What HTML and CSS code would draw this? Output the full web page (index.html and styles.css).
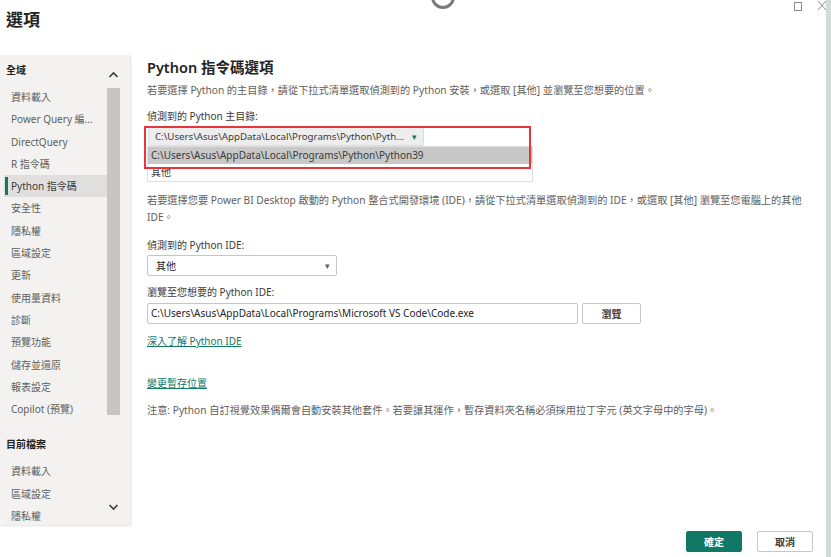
FILE: index.html
```html
<!DOCTYPE html>
<html lang="zh-Hant">
<head>
    <meta charset="UTF-8">
    <meta name="viewport" content="width=device-width, initial-scale=1.0">
    <title>選項</title>
    <link rel="stylesheet" href="styles.css">
</head>
<body>
    <div class="window">
        <div class="dialog">
            <div class="titlebar">
                <h1>選項</h1>
                <div class="controls">
                    <svg class="ctl" width="10" height="12" viewBox="0 0 10 12"><rect x="1.5" y="2.5" width="7" height="8" fill="none" stroke="#8a8a8a" stroke-width="1"/></svg>
                    <svg class="ctl" width="10" height="12" viewBox="0 0 10 12"><path d="M1 1 L9 10 M9 1 L1 10" stroke="#8a8a8a" stroke-width="1" fill="none"/></svg>
                </div>
                <span class="spinner"></span>
            </div>
            <div class="body">
                <div class="sidebar">
                    <div class="nav">
                        <div class="group first">全域</div>
                        <div class="item">資料載入</div>
                        <div class="item">Power Query 編...</div>
                        <div class="item">DirectQuery</div>
                        <div class="item">R 指令碼</div>
                        <div class="item selected">Python 指令碼</div>
                        <div class="item">安全性</div>
                        <div class="item">隱私權</div>
                        <div class="item">區域設定</div>
                        <div class="item">更新</div>
                        <div class="item">使用量資料</div>
                        <div class="item">診斷</div>
                        <div class="item">預覽功能</div>
                        <div class="item">儲存並還原</div>
                        <div class="item">報表設定</div>
                        <div class="item">Copilot (預覽)</div>
                        <div class="group">目前檔案</div>
                        <div class="item">資料載入</div>
                        <div class="item">區域設定</div>
                        <div class="item">隱私權</div>
                    </div>
                    <div class="scrollbar">
                        <svg width="13" height="10" viewBox="0 0 13 10"><path d="M2.5 7 L6.5 3 L10.5 7" stroke="#3b3a39" stroke-width="1.6" fill="none"/></svg>
                        <div class="thumb"></div>
                        <svg class="down" width="13" height="10" viewBox="0 0 13 10"><path d="M2.5 3 L6.5 7 L10.5 3" stroke="#3b3a39" stroke-width="1.6" fill="none"/></svg>
                    </div>
                </div>
                <div class="content">
                    <h2>Python 指令碼選項</h2>
                    <p class="desc">若要選擇 Python 的主目錄，請從下拉式清單選取偵測到的 Python 安裝，或選取 [其他] 並瀏覽至您想要的位置。</p>
                    <div class="label">偵測到的 Python 主目錄:</div>
                    <div class="dropdown-open">
                        <div class="select active">
                            <span>C:\Users\Asus\AppData\Local\Programs\Python\Pyth...</span>
                            <span class="caret green">▾</span>
                        </div>
                        <div class="options">
                            <div class="option hover">C:\Users\Asus\AppData\Local\Programs\Python\Python39</div>
                            <div class="option">其他</div>
                        </div>
                        <div class="highlight"></div>
                    </div>
                    <p class="desc two">若要選擇您要 Power BI Desktop 啟動的 Python 整合式開發環境 (IDE)，請從下拉式清單選取偵測到的 IDE，或選取 [其他] 瀏覽至您電腦上的其他 IDE。</p>
                    <div class="label">偵測到的 Python IDE:</div>
                    <div class="select small">
                        <span>其他</span>
                        <span class="caret">▾</span>
                    </div>
                    <div class="label gap">瀏覽至您想要的 Python IDE:</div>
                    <div class="browse-row">
                        <div class="input">C:\Users\Asus\AppData\Local\Programs\Microsoft VS Code\Code.exe</div>
                        <button class="btn">瀏覽</button>
                    </div>
                    <a class="link first-link" href="#">深入了解 Python IDE</a>
                    <a class="link second-link" href="#">變更暫存位置</a>
                    <p class="desc note">注意: Python 自訂視覺效果偶爾會自動安裝其他套件。若要讓其運作，暫存資料夾名稱必須採用拉丁字元 (英文字母中的字母)。</p>
                    <div class="footer">
                        <button class="btn primary">確定</button>
                        <button class="btn">取消</button>
                    </div>
                </div>
            </div>
        </div>
        <div class="edge"></div>
    </div>
</body>
</html>
```

FILE: styles.css
```css
body {
    margin: 0;
    padding: 0;
    background-color: #fff;
    font-family: "Noto Sans", "Noto Sans CJK TC", sans-serif;
    color: #3b3a39;
    overflow: hidden;
}
.window {
    display: flex;
    width: 831px;
    height: 557px;
}
.dialog {
    flex: 1;
    display: flex;
    flex-direction: column;
    min-width: 0;
}
.edge {
    width: 5px;
    flex-shrink: 0;
    background-color: #cfdcd8;
}
.titlebar {
    position: relative;
    height: 55px;
    display: flex;
    justify-content: space-between;
    align-items: flex-start;
}
.titlebar h1 {
    margin: 9px 0 0 6px;
    font-size: 17px;
    line-height: 22px;
    font-weight: 700;
    color: #252423;
}
.controls {
    display: flex;
    gap: 14px;
    margin-right: -1px;
}
.spinner {
    position: absolute;
    left: 431px;
    top: -15px;
    width: 18px;
    height: 18px;
    border: 3px solid #7a7a7a;
    border-radius: 50%;
}
.body {
    flex: 1;
    display: flex;
    min-height: 0;
}
.sidebar {
    flex-shrink: 0;
    width: 130px;
    height: 470px;
    background-color: #f3f2f1;
    display: flex;
    box-shadow: 1px 1px 2px rgba(0, 0, 0, 0.12);
}
.nav {
    width: 107px;
    font-size: 10px;
    color: #605e5c;
}
.group {
    font-weight: 700;
    color: #252423;
    height: 20px;
    line-height: 20px;
    padding-left: 6px;
    margin-top: 14px;
    margin-bottom: 6px;
}
.group.first {
    margin-top: 5px;
    margin-bottom: 6px;
}
.item {
    height: 22.3px;
    line-height: 22.3px;
    padding-left: 11px;
    white-space: nowrap;
    position: relative;
}
.item.selected {
    background-color: #e1dfdd;
    margin-left: 4px;
    padding-left: 7px;
    color: #3b3a39;
}
.item.selected::before {
    content: "";
    position: absolute;
    left: 1px;
    top: 2px;
    bottom: 2px;
    width: 3px;
    background-color: #117865;
}
.scrollbar {
    width: 13px;
    display: flex;
    flex-direction: column;
    align-items: center;
    padding-top: 15px;
}
.thumb {
    width: 13px;
    height: 327px;
    margin-top: 8px;
    background-color: #c8c6c4;
}
.scrollbar .down {
    margin-top: 87px;
}
.content {
    flex: 1;
    min-width: 0;
    display: flex;
    flex-direction: column;
    align-items: flex-start;
    padding: 2px 13px 5px 17px;
    font-size: 10px;
}
.content h2 {
    margin: 0;
    font-size: 14.5px;
    line-height: 20px;
    font-weight: 600;
    color: #252423;
}
.desc {
    margin: 6px 0 0;
    line-height: 14px;
    color: #605e5c;
    font-size: 10.2px;
}
.desc.two {
    margin-top: 10px;
    line-height: 17px;
    max-width: 665px;
}
.desc.note {
    margin-top: 13px;
}
.label {
    margin-top: 12px;
    line-height: 14px;
    color: #3b3a39;
}
.label.gap {
    margin-top: 9px;
}
.dropdown-open {
    position: relative;
    margin-top: 3px;
    width: 386px;
}
.select {
    display: flex;
    justify-content: space-between;
    align-items: center;
    box-sizing: border-box;
    height: 21px;
    padding: 0 6px 0 8px;
    border: 1px solid #c8c6c4;
    border-radius: 2px;
    background-color: #fff;
    color: #252423;
    margin-top: 3px;
}
.select.active {
    width: 276px;
    height: 20px;
    margin-top: 0;
    margin-left: 1px;
    background-color: #ededed;
    border-color: #dcdcdc;
    color: #3b3a39;
    padding: 0 6px 0 6px;
    font-size: 9.7px;
}
.select.small {
    width: 190px;
}
.caret {
    font-size: 9px;
    color: #605e5c;
}
.caret.green {
    color: #117865;
}
.options {
    width: 386px;
    border: 1px solid #e1dfdd;
    box-sizing: border-box;
    background-color: #fff;
}
.option {
    height: 17px;
    line-height: 17px;
    padding-left: 3px;
    color: #3b3a39;
}
.option.hover {
    background-color: #c8c8c8;
}
.highlight {
    position: absolute;
    left: -3px;
    top: 0;
    width: 383px;
    height: 39px;
    border: 2px solid #e8343b;
}
.browse-row {
    display: flex;
    gap: 4px;
    margin-top: 4px;
}
.input {
    box-sizing: border-box;
    width: 431px;
    height: 21px;
    line-height: 19px;
    padding-left: 3px;
    border: 1px solid #c8c6c4;
    border-radius: 2px;
    color: #252423;
}
.btn {
    box-sizing: border-box;
    width: 59px;
    height: 21px;
    padding: 0;
    border: 1px solid #c8c6c4;
    border-radius: 2px;
    background-color: #fff;
    font-family: inherit;
    font-size: 10px;
    font-weight: 700;
    color: #3b3a39;
}
.link {
    color: #117865;
    line-height: 14px;
    text-decoration: underline;
}
.first-link {
    margin-top: 10px;
}
.second-link {
    margin-top: 28px;
}
.footer {
    margin-top: auto;
    align-self: flex-end;
    display: flex;
    gap: 15px;
}
.footer .btn {
    width: 56px;
}
.btn.primary {
    background-color: #117865;
    border-color: #117865;
    color: #fff;
}
```
